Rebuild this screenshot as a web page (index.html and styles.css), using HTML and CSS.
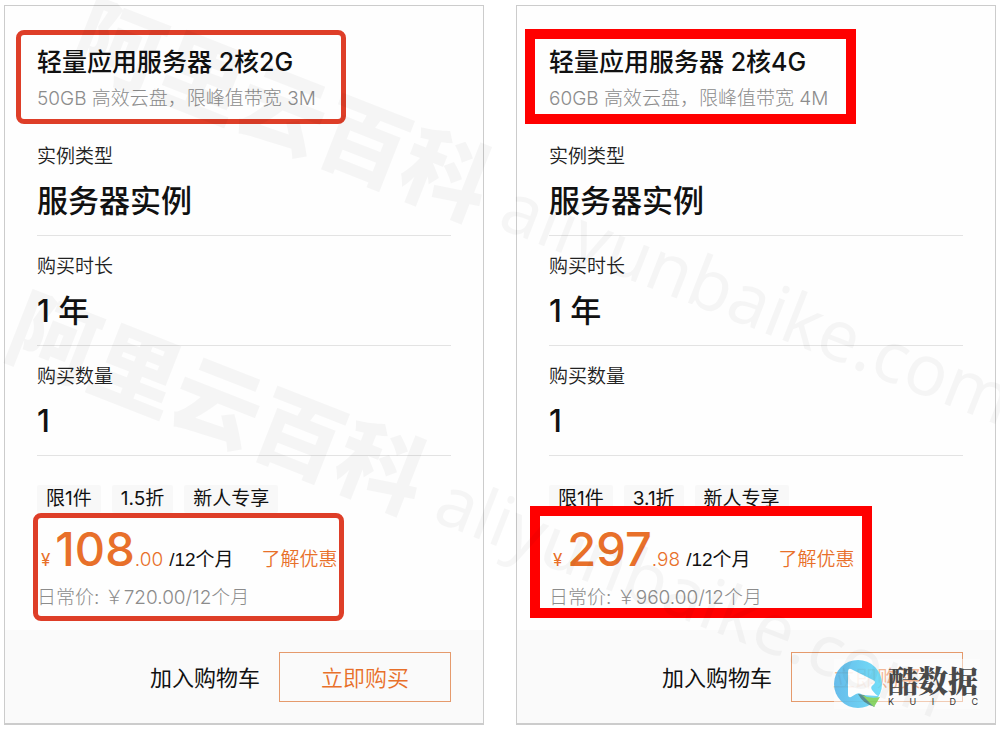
FILE: index.html
```html
<!DOCTYPE html>
<html lang="zh-CN">
<head>
<meta charset="utf-8">
<meta name="viewport" content="width=device-width, initial-scale=1">
<title>轻量应用服务器</title>
<link rel="stylesheet" href="styles.css">
</head>
<body>
<main class="plans">
  <article class="card">
    <div class="card-body">
      <h2 class="title">轻量应用服务器 2核2G</h2>
      <p class="summary">50GB 高效云盘，限峰值带宽 3M</p>
      <dl class="specs">
        <div class="spec"><dt>实例类型</dt><dd>服务器实例</dd></div>
        <div class="spec"><dt>购买时长</dt><dd>1 年</dd></div>
        <div class="spec"><dt>购买数量</dt><dd>1</dd></div>
      </dl>
      <ul class="tags"><li>限1件</li><li>1.5折</li><li>新人专享</li></ul>
      <p class="price"><span class="yen">¥</span><strong>108</strong><span class="cents">.00</span><span class="term">/12个月</span><a class="more" href="#">了解优惠</a></p>
      <p class="daily">日常价: ￥720.00/12个月</p>
    </div>
    <footer class="actions">
      <button class="cart" type="button">加入购物车</button>
      <button class="buy" type="button">立即购买</button>
    </footer>
    <span class="mark mark-round mark-title"></span>
    <span class="mark mark-round mark-price"></span>
  </article>
  <article class="card">
    <div class="card-body">
      <h2 class="title">轻量应用服务器 2核4G</h2>
      <p class="summary">60GB 高效云盘，限峰值带宽 4M</p>
      <dl class="specs">
        <div class="spec"><dt>实例类型</dt><dd>服务器实例</dd></div>
        <div class="spec"><dt>购买时长</dt><dd>1 年</dd></div>
        <div class="spec"><dt>购买数量</dt><dd>1</dd></div>
      </dl>
      <ul class="tags"><li>限1件</li><li>3.1折</li><li>新人专享</li></ul>
      <p class="price"><span class="yen">¥</span><strong>297</strong><span class="cents">.98</span><span class="term">/12个月</span><a class="more" href="#">了解优惠</a></p>
      <p class="daily">日常价: ￥960.00/12个月</p>
    </div>
    <footer class="actions">
      <button class="cart" type="button">加入购物车</button>
      <button class="buy" type="button">立即购买</button>
    </footer>
    <span class="mark mark-square mark-title"></span>
    <span class="mark mark-square mark-price"></span>
    <div class="brand">
      <svg class="brand-icon" viewBox="0 0 50 50" aria-hidden="true">
        <defs><linearGradient id="sky" x1="0" y1="0" x2="1" y2="0"><stop offset="0" stop-color="#4db1e8"/><stop offset="1" stop-color="#5cd9f8"/></linearGradient></defs>
        <circle cx="24" cy="25" r="24" fill="url(#sky)"/>
        <path d="M17 10Q14 9 14 13V35Q14 39 17 38L22 35Q26 33 28 36L44 37Q41 35 38 31Q36 28 39 26Q43 23 39 21Z" fill="#fff"/>
        <path d="M24 35Q29 45 41 48L30 36Z" fill="#3e7d80"/>
        <path d="M28 36Q35 40 46 38L40 48Z" fill="#77cf50"/>
      </svg>
      <div class="brand-text">
        <div class="brand-name">酷数据</div>
        <div class="brand-sub"><span>K</span><span>U</span><span>I</span><span>D</span><span>C</span></div>
      </div>
    </div>
  </article>
  <svg class="watermark" viewBox="0 0 1000 729" aria-hidden="true">
    <g transform="translate(66 60) rotate(21.5)"><text class="wm-cn">阿里云百科</text><text class="wm-en" x="461" y="-2">aliyunbaike.com</text></g>
    <g transform="translate(1 353) rotate(21.5)"><text class="wm-cn">阿里云百科</text><text class="wm-en" x="461" y="-2">aliyunbaike.com</text></g>
  </svg>
</main>
</body>
</html>
```
FILE: styles.css
```css
* { box-sizing: border-box; }

body {
  margin: 0;
  background: #fff;
  color: #111;
  font-family: Inter, "Noto Sans CJK SC", sans-serif;
  font-size: 19px;
  line-height: 28px;
}

h2, p, dl, dd, ul { margin: 0; padding: 0; }

.plans {
  position: relative;
  display: grid;
  grid-template-columns: 1fr 1fr;
  gap: 32px;
  padding: 5px 4px;
  overflow: hidden;
}

.card {
  position: relative;
  border: 1px solid #ccc;
  border-bottom-width: 2px;
  background: #fefefe;
}

.card-body { padding: 38px 32px 18px; }

.title {
  font-size: 25px;
  line-height: 36px;
  font-weight: 500;
}

.summary {
  line-height: 38px;
  font-weight: 300;
  color: #8c8c8c;
}

.specs { margin-top: 8px; }

.spec {
  padding: 17px 0 17px;
  border-bottom: 1px solid #e3e3e3;
}

.spec dt {
  font-weight: 350;
  color: #222;
}

.spec dd {
  margin-top: 13px;
  font-size: 31px;
  line-height: 34px;
  font-weight: 500;
}

.tags {
  display: flex;
  gap: 11px;
  margin-top: 29px;
  list-style: none;
}

.tags li {
  padding: 0 9px;
  background: #f8f8f8;
  border-radius: 2px;
}

.price {
  display: flex;
  align-items: baseline;
  height: 48px;
  margin: 12px 0 11px;
  padding-left: 4px;
  color: #e8702a;
}

.price strong {
  margin-left: 5px;
  font-size: 47px;
  line-height: 48px;
  font-weight: 500;
}

.yen { font-size: 17px; }

.cents {
  font-weight: 300;
}

.term {
  margin-left: 6px;
  font-family: "Liberation Sans", "Noto Sans CJK SC", sans-serif;
  color: #111;
}

.more {
  margin-left: 28px;
  font-weight: 350;
  color: inherit;
  text-decoration: none;
}

.daily {
  font-weight: 300;
  color: #8c8c8c;
}

.actions {
  display: flex;
  justify-content: flex-end;
  align-items: center;
  gap: 19px;
  padding: 22px 32px 21px;
  background: #fafafa;
}

.actions button {
  padding: 2px 0 0;
  border: 0;
  background: none;
  font: inherit;
  font-size: 22px;
  color: #111;
}

.actions .buy {
  width: 172px;
  height: 50px;
  border: 1px solid #e59a6c;
  font-weight: 350;
  color: #e8702a;
}

.mark { position: absolute; }

.mark-round {
  border: 5px solid #de3e28;
  border-radius: 8px;
}

.mark-square { border: 10px solid #f00; }

.mark-round.mark-title { left: 11px; top: 24px; width: 330px; height: 94px; }
.mark-round.mark-price { left: 28px; top: 507px; width: 311px; height: 108px; }
.mark-square.mark-title { left: 8px; top: 23px; width: 331px; height: 95px; }
.mark-square.mark-price { left: 13px; top: 500px; width: 342px; height: 112px; }

.brand {
  position: absolute;
  right: 15px;
  bottom: 14px;
  display: flex;
  align-items: center;
  gap: 4px;
  padding-right: 2px;
  background: rgba(253, 253, 253, 0.5);
}

.brand-icon {
  width: 50px;
  height: 50px;
  opacity: 0.85;
}

.brand-text { width: 90px; }

.brand-name {
  font-family: "Noto Serif CJK SC", "Noto Sans CJK SC", serif;
  font-size: 30px;
  line-height: 36px;
  font-weight: 900;
  color: #4a4a4a;
}

.brand-sub {
  display: flex;
  justify-content: space-between;
  font-size: 9px;
  line-height: 10px;
  color: #333;
}

.watermark {
  position: absolute;
  left: 0;
  top: 0;
  width: 100%;
  pointer-events: none;
  fill: #000;
  fill-opacity: 0.035;
}

.wm-cn {
  font-family: "Noto Sans CJK SC", sans-serif;
  font-size: 88px;
  font-weight: 900;
}

.wm-en {
  font-family: "Noto Sans", sans-serif;
  font-size: 71px;
}
```
